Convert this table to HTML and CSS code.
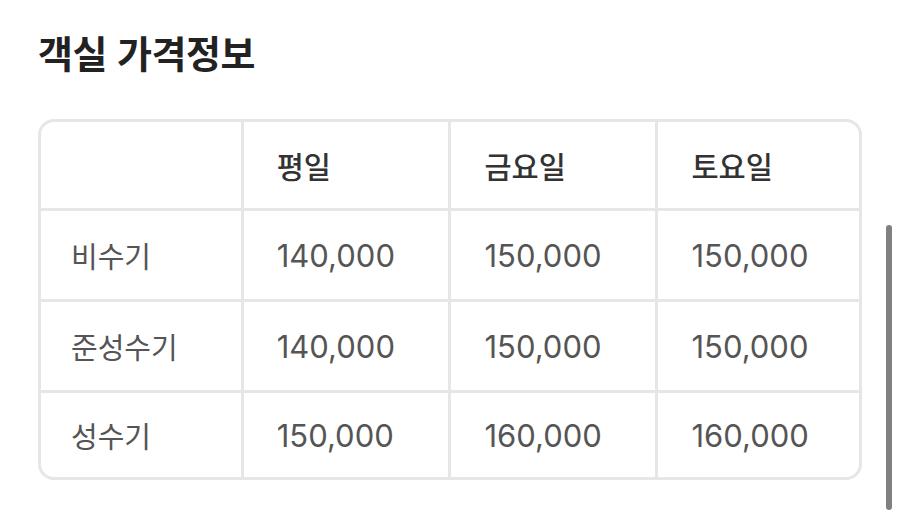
FILE: index.html
```html
<!DOCTYPE html>
<html lang="ko">
<head>
<meta charset="utf-8">
<link rel="stylesheet" href="styles.css">
</head>
<body>
<div class="page">
  <h1 class="title">객실 가격정보</h1>
  <div class="table-wrap">
    <table class="price-table">
      <colgroup>
        <col class="col-a">
        <col class="col-b">
        <col class="col-c">
        <col class="col-d">
      </colgroup>
      <thead>
        <tr class="head-row">
          <th></th>
          <th>평일</th>
          <th>금요일</th>
          <th>토요일</th>
        </tr>
      </thead>
      <tbody>
        <tr class="body-row">
          <td>비수기</td>
          <td>140,000</td>
          <td>150,000</td>
          <td>150,000</td>
        </tr>
        <tr class="body-row">
          <td>준성수기</td>
          <td>140,000</td>
          <td>150,000</td>
          <td>150,000</td>
        </tr>
        <tr class="body-row last">
          <td>성수기</td>
          <td>150,000</td>
          <td>160,000</td>
          <td>160,000</td>
        </tr>
      </tbody>
    </table>
  </div>
</div>
<div class="scrollbar"></div>
</body>
</html>
```
FILE: styles.css
```css
html, body {
  margin: 0;
  padding: 0;
  background: #ffffff;
}
body {
  font-family: "Noto Sans CJK KR", "Noto Sans", sans-serif;
  width: 900px;
  height: 514px;
  overflow: hidden;
  position: relative;
}
.page {
  padding: 26px 38px 0 38px;
}
.title {
  margin: 0;
  font-size: 38px;
  font-weight: 700;
  color: #222222;
  line-height: 52px;
  letter-spacing: -0.5px;
}
.table-wrap {
  margin-top: 41px;
  width: 824px;
  box-sizing: border-box;
  border: 3px solid #e6e6e6;
  border-radius: 16px;
  overflow: hidden;
}
.price-table {
  width: 100%;
  border-collapse: collapse;
  table-layout: fixed;
}
.col-a { width: 24.6%; }
.col-b { width: 25.4%; }
.col-c { width: 25.3%; }
.col-d { width: 24.7%; }
.price-table th,
.price-table td {
  text-align: left;
  padding: 0 0 0 33px;
  border-left: 3px solid #e6e6e6;
  border-top: 3px solid #e6e6e6;
}
.price-table th:first-child,
.price-table td:first-child {
  border-left: none;
  padding-left: 30px;
}
.head-row th {
  border-top: none;
  height: 86px;
  font-size: 29.5px;
  font-weight: 500;
  color: #333333;
}
.body-row td {
  height: 88px;
  font-family: "Inter", "Noto Sans CJK KR", sans-serif;
  font-size: 31px;
  font-weight: 400;
  color: #555555;
}
.body-row td:first-child {
  font-family: "Noto Sans CJK KR", sans-serif;
  font-size: 29px;
}
.body-row.last td {
  height: 84px;
}
.scrollbar {
  position: absolute;
  left: 886px;
  top: 225px;
  width: 6px;
  height: 285px;
  border-radius: 3px;
  background: #808080;
}
```
